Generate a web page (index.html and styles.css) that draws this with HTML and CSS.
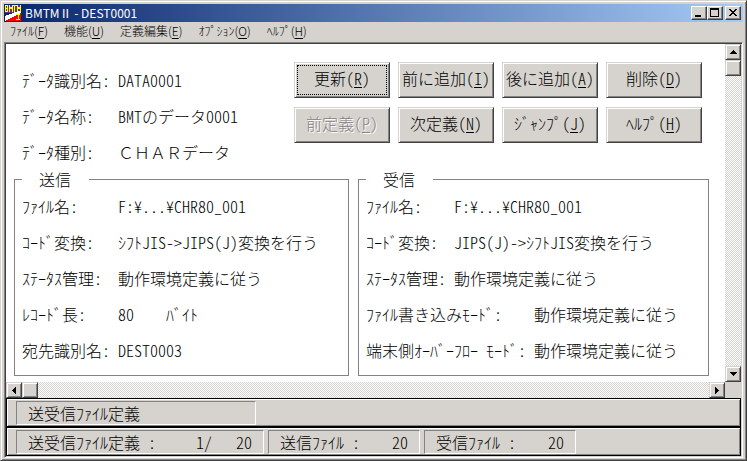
FILE: index.html
```html
<!DOCTYPE html>
<html lang="ja">
<head>
    <meta charset="UTF-8">
    <meta name="viewport" content="width=device-width, initial-scale=1.0">
    <title>BMTMⅡ - DEST0001</title>
    <link rel="stylesheet" href="styles.css">
</head>
<body>
    <div class="window">
        <header class="titlebar">
            <svg class="app-icon" viewBox="0 0 16 16" shape-rendering="crispEdges" aria-hidden="true">
                <rect width="16" height="8" fill="#63307b"/>
                <path d="M0 16V11L16 5V16z" fill="#fff"/>
                <path d="M0 16L16 8V16z" fill="#f00"/>
                <path d="M.5 7V.5H2.500V3.500H.5M2.500 4V6.500H.5M4.500 7V.5L6 4L7.500 .5V7M8 .5H11.500M9.500 .5V7M12.500 7V.5L14 4L15.500 .5V7M11 9.500H15M13 9.500V14.500M11 14.500H15" fill="none" stroke="#ff0"/>
            </svg>
            <h1 class="title">BMTMⅡ - DEST0001</h1>
            <div class="window-buttons">
                <button type="button" class="window-button" aria-label="最小化">
                    <svg viewBox="0 0 12 10" shape-rendering="crispEdges"><rect x="2" y="7" width="6" height="2"/></svg>
                </button>
                <button type="button" class="window-button" aria-label="最大化">
                    <svg viewBox="0 0 12 10" shape-rendering="crispEdges"><path d="M1 0H10V9H1zM2 2V8H9V2z" fill-rule="evenodd"/></svg>
                </button>
                <button type="button" class="window-button close" aria-label="閉じる">
                    <svg viewBox="0 0 12 10" shape-rendering="crispEdges"><path d="M2 1h2v1h1v1h2V2h1V1h2v1H9v1H8v1H7v1h1v1h1v1h1v1H8V7H7V6H5v1H4v1H2V7h1V6h1V5h1V4H4V3H3V2H2z"/></svg>
                </button>
            </div>
        </header>

        <nav class="menubar">
            <button type="button">ﾌｧｲﾙ(<u>F</u>)</button>
            <button type="button">機能(<u>U</u>)</button>
            <button type="button">定義編集(<u>E</u>)</button>
            <button type="button">ｵﾌﾟｼｮﾝ(<u>O</u>)</button>
            <button type="button">ﾍﾙﾌﾟ(<u>H</u>)</button>
        </nav>

        <div class="client">
            <div class="scroll-pane">
                <main class="content">
                    <div class="summary">
                        <dl class="fields">
                            <div><dt>ﾃﾞｰﾀ識別名:</dt><dd>DATA0001</dd></div>
                            <div><dt>ﾃﾞｰﾀ名称:</dt><dd>BMTのデータ0001</dd></div>
                            <div><dt>ﾃﾞｰﾀ種別:</dt><dd class="full-width">ＣＨＡＲデータ</dd></div>
                        </dl>
                        <div class="actions">
                            <button type="button" class="action focused">更新(<u>R</u>)</button>
                            <button type="button" class="action">前に追加(<u>I</u>)</button>
                            <button type="button" class="action">後に追加(<u>A</u>)</button>
                            <button type="button" class="action">削除(<u>D</u>)</button>
                            <button type="button" class="action" disabled>前定義(<u>P</u>)</button>
                            <button type="button" class="action">次定義(<u>N</u>)</button>
                            <button type="button" class="action">ｼﾞｬﾝﾌﾟ(<u>J</u>)</button>
                            <button type="button" class="action">ﾍﾙﾌﾟ(<u>H</u>)</button>
                        </div>
                    </div>

                    <div class="groups">
                        <fieldset class="group">
                            <legend>送信</legend>
                            <dl class="fields">
                                <div><dt>ﾌｧｲﾙ名:</dt><dd>F:¥...¥CHR80_001</dd></div>
                                <div><dt>ｺｰﾄﾞ変換:</dt><dd>ｼﾌﾄJIS-&gt;JIPS(J)変換を行う</dd></div>
                                <div><dt>ｽﾃｰﾀｽ管理:</dt><dd>動作環境定義に従う</dd></div>
                                <div><dt>ﾚｺｰﾄﾞ長:</dt><dd>80    ﾊﾞｲﾄ</dd></div>
                                <div><dt>宛先識別名:</dt><dd>DEST0003</dd></div>
                            </dl>
                        </fieldset>
                        <fieldset class="group">
                            <legend>受信</legend>
                            <dl class="fields narrow">
                                <div><dt>ﾌｧｲﾙ名:</dt><dd>F:¥...¥CHR80_001</dd></div>
                                <div><dt>ｺｰﾄﾞ変換:</dt><dd>JIPS(J)-&gt;ｼﾌﾄJIS変換を行う</dd></div>
                                <div><dt>ｽﾃｰﾀｽ管理:</dt><dd>動作環境定義に従う</dd></div>
                                <div class="wide"><dt>ﾌｧｲﾙ書き込みﾓｰﾄﾞ:</dt><dd>動作環境定義に従う</dd></div>
                                <div class="wide"><dt>端末側ｵｰﾊﾞｰﾌﾛｰ ﾓｰﾄﾞ:</dt><dd>動作環境定義に従う</dd></div>
                            </dl>
                        </fieldset>
                    </div>
                </main>

                <div class="scrollbar vertical">
                    <button type="button" class="scroll-button" aria-label="上へ"><svg viewBox="0 0 7 4" shape-rendering="crispEdges"><path d="M3 0h1v1h1v1h1v1h1v1H0V3h1V2h1V1h1z"/></svg></button>
                    <div class="thumb"></div>
                    <button type="button" class="scroll-button last" aria-label="下へ"><svg viewBox="0 0 7 4" shape-rendering="crispEdges"><path d="M0 0h7v1H6v1H5v1H4v1H3V3H2V2H1V1H0z"/></svg></button>
                </div>
                <div class="scrollbar horizontal">
                    <button type="button" class="scroll-button" aria-label="左へ"><svg class="side" viewBox="0 0 4 7" shape-rendering="crispEdges"><path d="M4 0v7H3V6H2V5H1V4H0V3h1V2h1V1h1V0z"/></svg></button>
                    <div class="thumb"></div>
                    <button type="button" class="scroll-button last" aria-label="右へ"><svg class="side" viewBox="0 0 4 7" shape-rendering="crispEdges"><path d="M0 0h1v1h1v1h1v1h1v1H3v1H2v1H1v1H0z"/></svg></button>
                </div>
            </div>

            <div class="statusbar">
                <div class="panel title-panel">送受信ﾌｧｲﾙ定義</div>
            </div>
            <div class="statusbar">
                <div class="panel">送受信ﾌｧｲﾙ定義 :     1/   20</div>
                <div class="panel">送信ﾌｧｲﾙ :    20</div>
                <div class="panel">受信ﾌｧｲﾙ :    20</div>
            </div>
        </div>
    </div>
</body>
</html>
```

FILE: styles.css
```css
* {
    box-sizing: border-box;
}

body {
    margin: 0;
    font-family: "Noto Sans CJK JP", sans-serif;
    font-weight: 300;
    font-size: 16px;
    color: #000;
    background-color: #d6d3ce;
}

button {
    margin: 0;
    padding: 0;
    border: none;
    font: inherit;
    color: inherit;
    background-color: #d6d3ce;
}

.window {
    display: flex;
    flex-direction: column;
    min-height: 100vh;
    padding: 2px;
    border: 1px solid;
    border-color: #d6d3ce #424142 #424142 #d6d3ce;
    box-shadow: inset 1px 1px #fff, inset -1px -1px #848284;
}

/* title bar */
.titlebar {
    display: flex;
    align-items: center;
    height: 18px;
    margin: 1px;
    padding: 0 2px 0 1px;
    color: #fff;
    background: linear-gradient(to right, #08246b, #a5cbf7);
}

.app-icon {
    width: 16px;
    height: 16px;
}

.title {
    flex: 1;
    margin: 0 0 0 4px;
    font-size: 12px;
    font-weight: 400;
    line-height: 16px;
}

.window-buttons {
    display: flex;
}

.window-button {
    display: flex;
    width: 16px;
    height: 14px;
    padding: 1px;
    border: 1px solid;
    border-color: #fff #424142 #424142 #fff;
    box-shadow: inset -1px -1px #848284;
}

.window-button svg {
    width: 12px;
    height: 10px;
}

.window-button.close {
    margin-left: 2px;
}

/* menu */
.menubar {
    display: flex;
    align-items: flex-start;
    gap: 16px;
    height: 19px;
    padding: 0 7px;
    font-size: 12px;
    line-height: 16px;
}

u {
    text-decoration-thickness: 1px;
    text-underline-offset: 2px;
}

/* client area */
.client {
    flex: 1;
    display: flex;
    flex-direction: column;
    margin: 0 1px;
    padding: 1px;
    border: 1px solid;
    border-color: #848284 #fff #fff #848284;
    box-shadow: inset 1px 1px #424142;
    font-feature-settings: "hwid";
}

.scroll-pane {
    flex: 1;
    display: grid;
    grid-template-columns: 1fr 16px;
    grid-template-rows: 1fr 16px;
}

.content {
    padding: 18px 16px 5px 8px;
    background-color: #fff;
}

.summary {
    display: flex;
    justify-content: space-between;
    padding: 0 7px 0 8px;
}

.fields {
    margin: 0;
    line-height: 36px;
}

.fields div {
    display: flex;
}

.fields dt {
    width: 96px;
    white-space: nowrap;
}

.fields dd {
    margin: 0;
    white-space: pre;
}

.fields .full-width {
    font-feature-settings: normal;
}

.fields.narrow dt {
    width: 88px;
}

.fields.narrow .wide dt {
    width: 168px;
}

.actions {
    display: grid;
    grid-template-columns: repeat(4, 96px);
    gap: 9px 8px;
    align-content: start;
}

.action {
    height: 36px;
    padding-bottom: 4px;
    border: 1px solid;
    border-color: #d6d3ce #424142 #424142 #d6d3ce;
    box-shadow: inset 1px 1px #fff, inset -1px -1px #848284;
    white-space: nowrap;
}

.action.focused {
    outline: 1px dotted #000;
    outline-offset: -4px;
}

.action:disabled {
    color: #848284;
    text-shadow: 1px 1px #fff;
}

.groups {
    display: grid;
    grid-template-columns: 21fr 22fr;
    gap: 9px;
}

.group {
    min-width: 0;
    margin: 0;
    padding: 0 7px 7px;
    border: 1px solid #848284;
}

.group legend {
    padding: 0 18px 0 17px;
    line-height: 18px;
}

/* scroll bars */
.scrollbar {
    display: flex;
    background: repeating-conic-gradient(#fff 0 25%, #d6d3ce 0 50%) 0 0 / 2px 2px;
}

.vertical {
    flex-direction: column;
}

.scroll-button,
.thumb {
    display: flex;
    align-items: center;
    justify-content: center;
    width: 16px;
    height: 16px;
    background-color: #d6d3ce;
    border: 1px solid;
    border-color: #d6d3ce #424142 #424142 #d6d3ce;
    box-shadow: inset 1px 1px #fff, inset -1px -1px #848284;
}

.scroll-button svg {
    width: 7px;
    height: 4px;
}

.scroll-button svg.side {
    width: 4px;
    height: 7px;
}

.vertical .last {
    margin-top: auto;
}

.horizontal .last {
    margin-left: auto;
}

/* status bars */
.statusbar {
    display: flex;
    gap: 4px;
    padding: 2px 9px 1px;
    border: 1px solid #000;
    box-shadow: inset 1px 1px #fff, inset -1px -1px #848284;
}

.panel {
    height: 24px;
    padding: 0 11px;
    border: 1px solid;
    border-color: #848284 #fff #fff #848284;
    line-height: 22px;
    white-space: pre;
}

.title-panel {
    width: 240px;
}
```
